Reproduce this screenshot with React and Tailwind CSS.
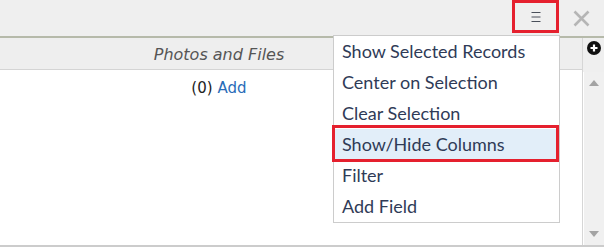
import { useState } from 'react';

const menuItems = [
  'Show Selected Records',
  'Center on Selection',
  'Clear Selection',
  'Show/Hide Columns',
  'Filter',
  'Add Field',
];

export default function App() {
  const [active] = useState('Show/Hide Columns');

  return (
    <div className="relative w-[604px] h-[249px] overflow-hidden bg-white flex flex-col">
      {/* top toolbar */}
      <div className="h-[36px] shrink-0 bg-[#efefef] flex justify-end items-start">
        <button className="w-[47px] h-[33px] border-[3px] border-[#e5202e] flex items-center justify-center">
          <svg width="10" height="12" viewBox="0 0 10 12">
            <path d="M0.5 1.5h9M0.5 6h9M0.5 10.5h9" stroke="#4a4f5a" strokeWidth="1" fill="none" />
          </svg>
        </button>
        <button className="w-[45px] h-[36px] flex items-center justify-center">
          <svg width="17" height="17" viewBox="0 0 17 17">
            <path d="M1.5 1.5l14 14M15.5 1.5l-14 14" stroke="#b5b5b5" strokeWidth="2.6" fill="none" />
          </svg>
        </button>
      </div>
      <div className="h-[2px] shrink-0 bg-[#b6baaa]" />

      {/* grid */}
      <div className="flex flex-1 min-h-0">
        <div className="flex-1 flex flex-col">
          <div className="h-[32px] shrink-0 bg-[#eeeeee] border-b border-[#d4d4d4] flex">
            <div className="w-[438px] pt-[2px] flex items-center justify-center italic text-[16px] text-[#555555] font-['DejaVu_Sans',sans-serif]">
              Photos and Files
            </div>
          </div>
          <div className="flex-1">
            <div className="w-[438px] h-[37px] flex items-center justify-center text-[15px] font-['DejaVu_Sans',sans-serif]">
              <span className="text-[#222222]">(0)</span>
              <span className="ml-[5px] text-[#2a6cb8]">Add</span>
            </div>
          </div>
        </div>
        <div className="w-[22px] flex flex-col border-l border-[#d6d6d6]">
          <div className="h-[34px] shrink-0 bg-[#efefef] flex justify-center pt-[3px]">
            <svg width="14" height="14" viewBox="0 0 14 14">
              <circle cx="7" cy="7" r="7" fill="#111111" />
              <path d="M7 3.5v7M3.5 7h7" stroke="#ffffff" strokeWidth="2.2" />
            </svg>
          </div>
          <div className="flex-1 ml-[1px] bg-[#f0f0f0] flex flex-col items-center justify-between pt-[8px] pb-[8px]">
            <svg width="10" height="6" viewBox="0 0 10 6">
              <path d="M5 0L10 6H0z" fill="#a3a3a3" />
            </svg>
            <svg width="10" height="6" viewBox="0 0 10 6">
              <path d="M0 0h10L5 6z" fill="#a3a3a3" />
            </svg>
          </div>
        </div>
      </div>
      <div className="h-[2px] shrink-0 bg-[#cccccc]" />
      <div className="h-[2px] shrink-0" />

      {/* dropdown menu */}
      <div className="absolute left-[333px] top-[35px] w-[227px] bg-white border border-[#cccccc] font-['Lato',sans-serif] text-[18px] text-[#2f3b57]">
        {menuItems.map((item) => (
          <div
            key={item}
            className={`h-[31px] px-[8px] flex items-center ${item === active ? 'bg-[#e2eef9]' : ''}`}
          >
            {item}
          </div>
        ))}
      </div>
      {/* annotation box */}
      <div className="absolute left-[332px] top-[125px] w-[227px] h-[37px] border-[3px] border-[#e5202e]" />
    </div>
  );
}
